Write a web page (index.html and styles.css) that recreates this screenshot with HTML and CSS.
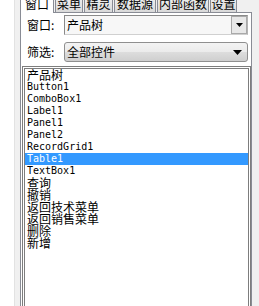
FILE: index.html
```html
<html>
  <head>
    <meta charset="UTF-8" />
    <title>控件选择</title>
    <link rel="stylesheet" href="styles.css">
  </head>
  <body>
    <div class="frame">
      <div class="tabs">
        <div class="tab tab-active w34">窗口</div>
        <div class="tab w28">菜单</div>
        <div class="tab w29">精灵</div>
        <div class="tab w42">数据源</div>
        <div class="tab w52">内部函数</div>
        <div class="tab w27">设置</div>
      </div>

      <div class="panel">
        <div class="field">
          <span class="label">窗口:</span>
          <div class="combo combo-edit">
            <span class="combo-text">产品树</span>
            <span class="drop-btn">
              <svg width="7" height="4" viewBox="0 0 7 4"><path d="M0 0h7L3.5 4z" fill="#000"/></svg>
            </span>
          </div>
        </div>
        <div class="field field-2">
          <span class="label">筛选:</span>
          <div class="combo combo-btn">
            <span class="combo-text">全部控件</span>
            <svg class="arrow" width="9" height="5" viewBox="0 0 9 5"><path d="M0 0h9L4.5 5z" fill="#000"/></svg>
          </div>
        </div>

        <ul class="list">
          <li>产品树</li>
          <li class="en">Button1</li>
          <li class="en">ComboBox1</li>
          <li class="en">Label1</li>
          <li class="en">Panel1</li>
          <li class="en">Panel2</li>
          <li class="en">RecordGrid1</li>
          <li class="en selected">Table1</li>
          <li class="en">TextBox1</li>
          <li>查询</li>
          <li>撤销</li>
          <li>返回技术菜单</li>
          <li>返回销售菜单</li>
          <li>删除</li>
          <li>新增</li>
        </ul>
      </div>
    </div>
  </body>
</html>
```

FILE: styles.css
```css
/* 控件选择パネル */
html,
body {
  margin: 0;
  background: #fff;
  overflow: hidden;
}
body {
  font-family: "Noto Sans CJK SC", "Liberation Sans", sans-serif;
  font-size: 12px;
  color: #000;
}

.frame {
  box-sizing: border-box;
  width: 245px;
  height: 306px;
  margin-left: 14px;
  padding-left: 5px;
  background: #f0f0f0;
  border-left: 1px solid #e2e2e2;
  overflow: hidden;
}

/** タブ */
.tabs {
  display: flex;
  align-items: flex-start;
  height: 17px;
  margin-top: -5px;
}
.tab {
  box-sizing: border-box;
  height: 17px;
  margin-right: 1px;
  border: 1px solid #898c95;
  border-bottom: none;
  background: linear-gradient(#f2f2f2, #d9d9d9);
  line-height: 15px;
  text-align: center;
  white-space: nowrap;
  overflow: hidden;
}
.tab-active {
  position: relative;
  z-index: 1;
  height: 18px;
  background: #fff;
}
.w27 { width: 27px; }
.w28 { width: 28px; }
.w29 { width: 29px; }
.w34 { width: 34px; }
.w42 { width: 42px; }
.w52 { width: 52px; }

/** パネル */
.panel {
  box-sizing: border-box;
  width: 232px;
  height: 294px;
  padding-top: 2px;
  border: 1px solid #898c95;
  border-bottom: none;
  background: #fff;
}
.field {
  display: flex;
  align-items: center;
  height: 20px;
}
.field-2 {
  margin-top: 7px;
}
.label {
  width: 37px;
  margin-left: 6px;
  line-height: 20px;
}

.combo {
  box-sizing: border-box;
  display: flex;
  align-items: center;
  width: 184px;
  height: 20px;
}
.combo-text {
  flex: 1;
  padding-left: 2px;
  line-height: 18px;
}
.combo-edit {
  border: 1px solid #8a8a8a;
  border-right-color: #b4b4b4;
  border-bottom-color: #d0d0d0;
  background: #f7f7f7;
}
.drop-btn {
  box-sizing: border-box;
  display: flex;
  align-items: center;
  justify-content: center;
  width: 16px;
  height: 18px;
  border: 1px solid #a9a9a9;
  background: #e8e8e8;
}
.combo-btn {
  border: 1px solid #8f8f8f;
  border-radius: 3px;
  background: linear-gradient(#f3f3f3 0%, #ebebeb 50%, #dddddd 50%, #cfcfcf 100%);
}
.combo-btn .arrow {
  margin-right: 5px;
}

/** リスト */
.list {
  box-sizing: border-box;
  width: 229px;
  height: 240px;
  margin: 4px 0 0 1px;
  padding: 0;
  border: 3px double #7d7d7d;
  border-bottom: none;
  background: #fff;
  list-style: none;
}
.list li {
  height: 12px;
  padding-left: 2px;
  line-height: 12px;
  white-space: nowrap;
}
.list li.en {
  font-family: "DejaVu Sans Mono", "Liberation Mono", monospace;
  font-size: 10px;
}
.list li.selected {
  background: #3399ff;
  color: #fff;
}
```
